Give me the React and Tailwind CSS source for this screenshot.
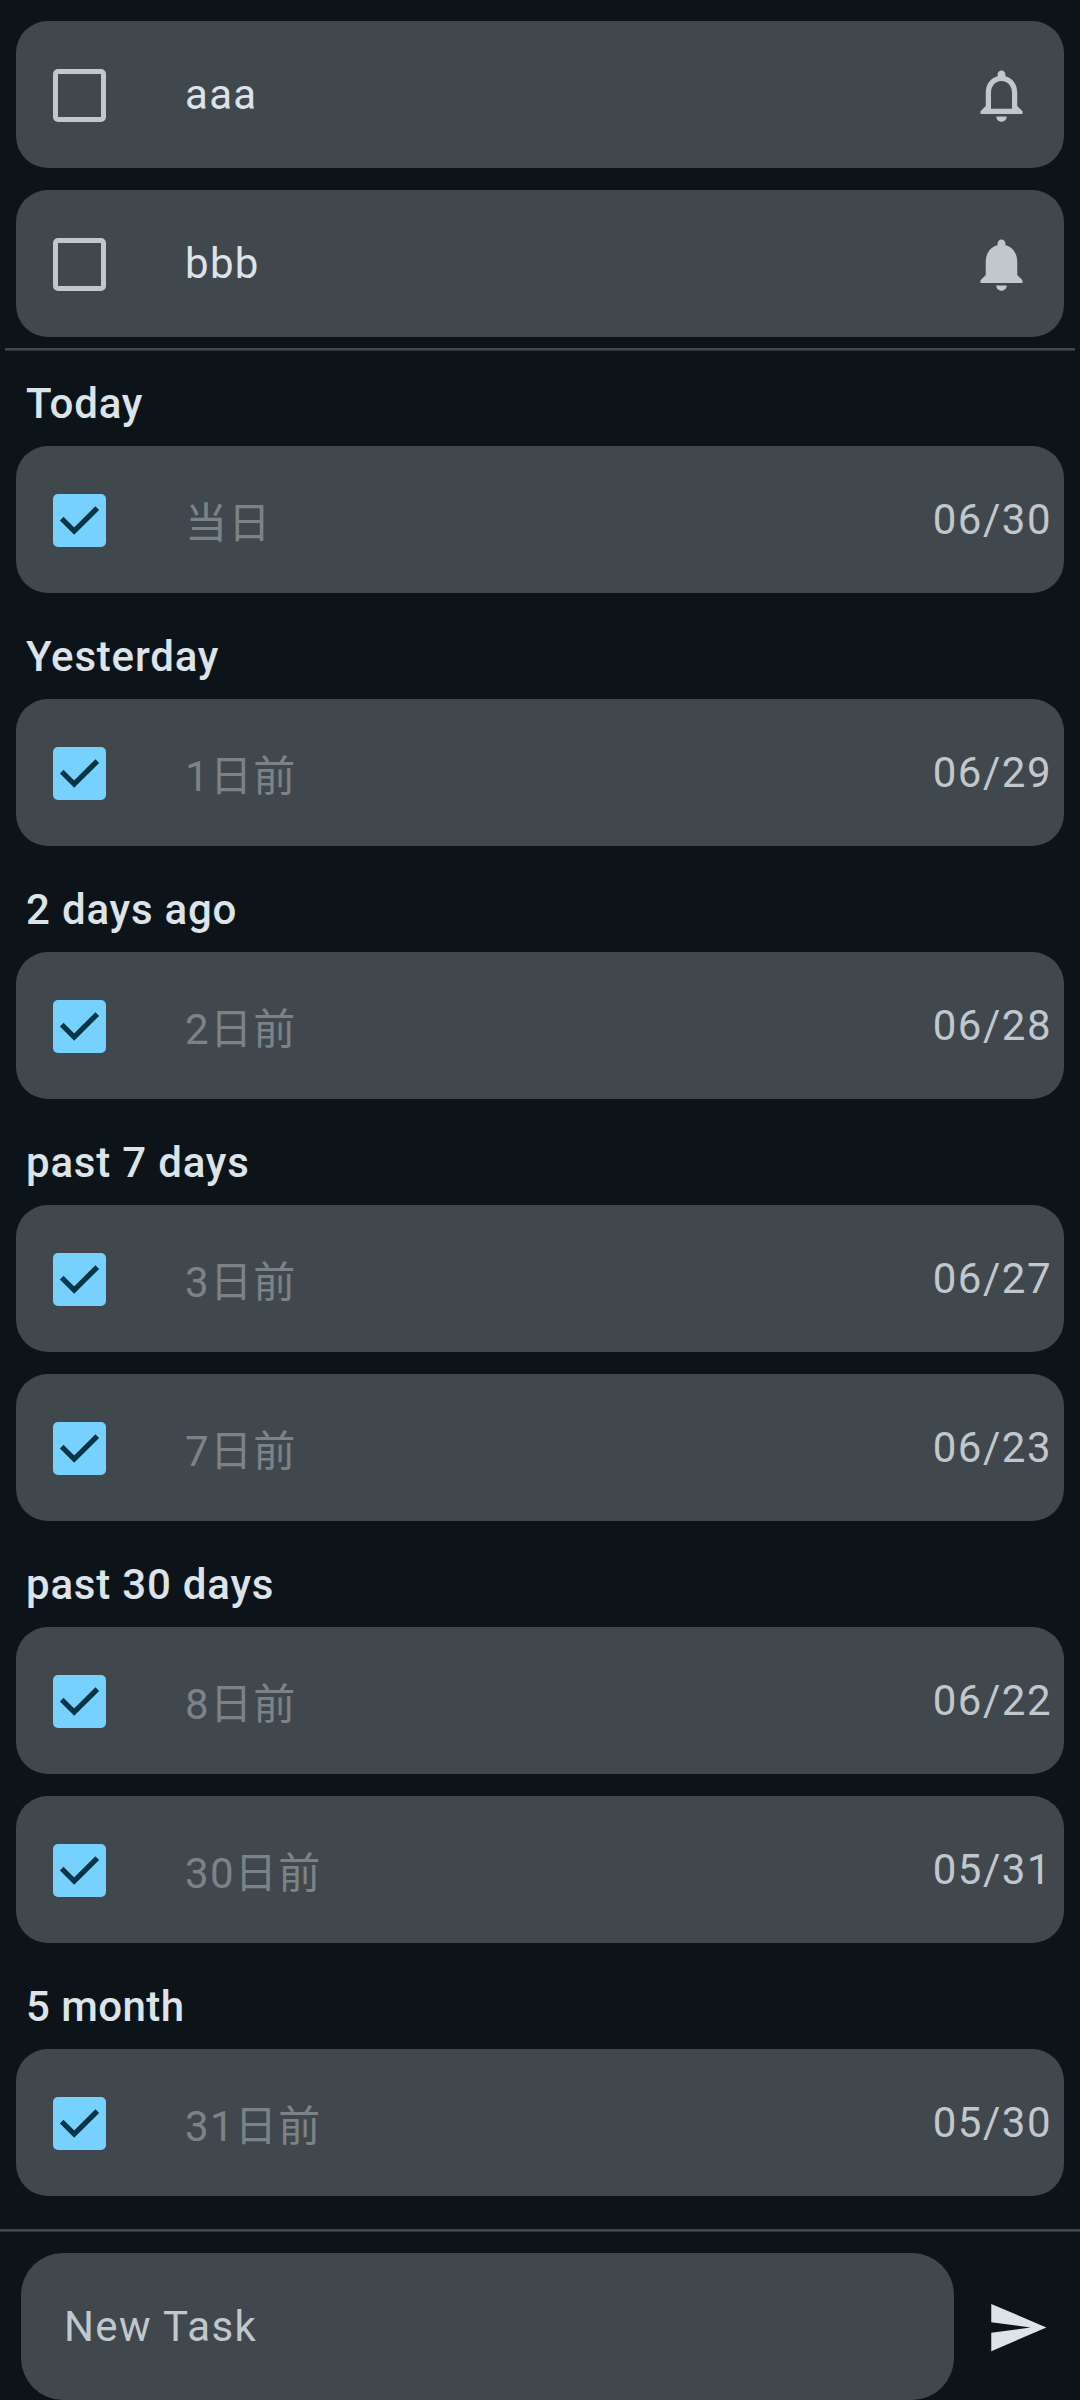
const activeTasks = [
  { title: "aaa", reminder: false },
  { title: "bbb", reminder: true },
];

const groups = [
  { label: "Today", tasks: [["当日", "06/30"]] },
  { label: "Yesterday", tasks: [["1日前", "06/29"]] },
  { label: "2 days ago", tasks: [["2日前", "06/28"]] },
  { label: "past 7 days", tasks: [["3日前", "06/27"], ["7日前", "06/23"]] },
  { label: "past 30 days", tasks: [["8日前", "06/22"], ["30日前", "05/31"]] },
  { label: "5 month", tight: true, tasks: [["31日前", "05/30"]] },
];

function Bell({ filled }) {
  return (
    <svg viewBox="0 0 24 24" className="mt-[2px] mr-[31px] size-[63px] fill-[#c0c7cd]">
      {filled ? (
        <path d="M12 22c1.1 0 2-.9 2-2h-4c0 1.1.9 2 2 2zm6-6v-5c0-3.07-1.63-5.64-4.5-6.32V4c0-.83-.67-1.5-1.5-1.5s-1.5.67-1.5 1.5v.68C7.64 5.36 6 7.92 6 11v5l-2 2v1h16v-1l-2-2z" />
      ) : (
        <path d="M12 22c1.1 0 2-.9 2-2h-4c0 1.1.9 2 2 2zm6-6v-5c0-3.07-1.63-5.64-4.5-6.32V4c0-.83-.67-1.5-1.5-1.5s-1.5.67-1.5 1.5v.68C7.64 5.36 6 7.92 6 11v5l-2 2v1h16v-1l-2-2zm-2 1H8v-6c0-2.48 1.51-4.5 4-4.5s4 2.02 4 4.5v6z" />
      )}
    </svg>
  );
}

function Checkbox({ checked }) {
  if (!checked) {
    return <span className="mt-[2px] size-[53px] shrink-0 rounded-[5px] border-[5px] border-[#c0c7cd]" />;
  }
  return (
    <span className="mt-[2px] size-[53px] shrink-0 rounded-[5px] bg-[#76d1ff]">
      <svg viewBox="0 0 53 53" className="size-[53px]" fill="none">
        <path d="M10.6 26.5 21.2 37.1 42.4 15.9" stroke="#003548" strokeWidth="5.25" strokeLinecap="square" />
      </svg>
    </span>
  );
}

function TaskCard({ title, checked, children }) {
  return (
    <div className="flex h-[147px] items-center rounded-[32px] bg-[#41484d] pl-[37px]">
      <Checkbox checked={checked} />
      <span
        className={
          checked
            ? "ml-[79px] flex-1 pt-[8px] text-[#7c8388]"
            : "ml-[79px] flex-1 text-[#dce3e9]"
        }
      >
        {title}
      </span>
      {children}
    </div>
  );
}

export default function App() {
  return (
    <div
      lang="ja"
      className="flex h-[2400px] w-[1080px] flex-col overflow-hidden bg-[#0c141a] font-['Roboto','Noto_Sans_CJK_JP',sans-serif] text-[42px] leading-[63px] tracking-[1.3125px]"
    >
      <main className="flex h-[2229px] flex-col pt-[21px]">
        <div className="flex flex-col gap-[22px] px-4">
          {activeTasks.map((task) => (
            <TaskCard key={task.title} title={task.title}>
              <Bell filled={task.reminder} />
            </TaskCard>
          ))}
        </div>
        <div className="mx-[5px] mt-[11px] h-[3px] shrink-0 border-b border-[#2d3439] bg-[#41484d]" />
        <div className="-mt-[11px] flex flex-col px-4">
          {groups.map((group) => (
            <section key={group.label}>
              <h2
                className={`flex h-[106px] items-end pb-[11px] pl-[10px] font-medium text-[#dce3e9] ${
                  group.tight ? "tracking-[0.45px]" : "tracking-[0.8px]"
                }`}
              >
                {group.label}
              </h2>
              <div className="flex flex-col gap-[22px]">
                {group.tasks.map(([title, date]) => (
                  <TaskCard key={title} title={title} checked>
                    <span className="mr-[12px] tracking-[1.5px] text-[#c0c7cd]">{date}</span>
                  </TaskCard>
                ))}
              </div>
            </section>
          ))}
        </div>
      </main>
      <div className="h-[3px] shrink-0 border-b border-[#2d3439] bg-[#41484d]" />
      <footer className="flex items-center pt-[21px] pl-[21px]">
        <div className="flex h-[147px] w-[933px] items-center rounded-[42px] bg-[#41484d] pl-[43px] tracking-[1.4px] text-[#c0c7cd]">
          New Task
        </div>
        <svg viewBox="0 0 24 24" className="mt-[2px] ml-[32px] size-[63px] fill-[#dce3e9]">
          <path d="M2.01 21 23 12 2.01 3 2 10l15 2-15 2z" />
        </svg>
      </footer>
    </div>
  );
}
